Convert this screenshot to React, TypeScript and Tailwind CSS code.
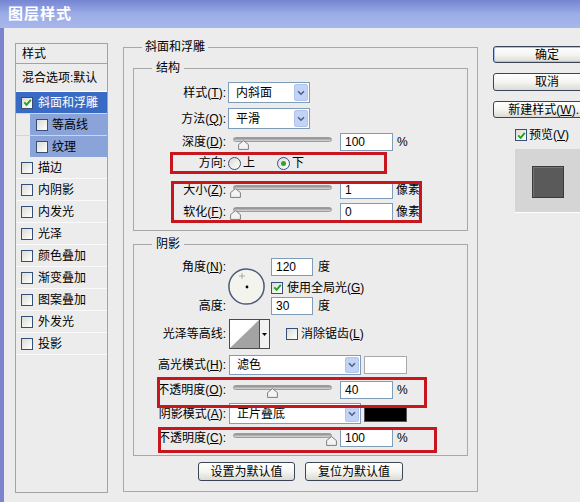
import React from 'react';

type Kids = { children?: React.ReactNode; className?: string };

const Check = ({ checked = false }: { checked?: boolean }) => (
  <span className="w-[12px] h-[12px] shrink-0 border border-[#34507a] bg-gradient-to-br from-[#dcdcd4] to-white flex items-center justify-center">
    {checked && (
      <svg width="9" height="9" viewBox="0 0 9 9">
        <path d="M1.3 4.4 L3.6 6.8 L7.8 1.8" fill="none" stroke="#21a121" strokeWidth="1.9" />
      </svg>
    )}
  </span>
);

const Radio = ({ checked = false }: { checked?: boolean }) => (
  <span className="w-[13px] h-[13px] shrink-0 rounded-full border border-[#34507a] bg-gradient-to-br from-[#dcdcd4] to-white flex items-center justify-center">
    {checked && <span className="w-[5px] h-[5px] rounded-full bg-[#2ba62b]" />}
  </span>
);

const Chevron = () => (
  <svg width="8" height="6" viewBox="0 0 8 6">
    <path d="M1 1.2 L4 4.2 L7 1.2" fill="none" stroke="#4d6185" strokeWidth="1.6" />
  </svg>
);

const Select = ({ value, className = '' }: { value: string; className?: string }) => (
  <div className={`flex items-center shrink-0 border border-[#7f9db9] bg-white ${className}`}>
    <span className="flex-1 pl-[7px]">{value}</span>
    <span className="w-[14px] self-stretch my-[1px] mr-[1px] rounded-[2px] bg-[#c3d3f6] border border-[#b1c4ee] flex items-center justify-center">
      <Chevron />
    </span>
  </div>
);

// handle centre is given in px from the left of the track
const Slider = ({ pos }: { pos: number }) => (
  <div className="relative w-[100px] h-[18px] ml-[6px] shrink-0">
    <div className="absolute left-[1px] right-0 top-[4px] h-[5px] rounded-full border border-[#9c9c9c] bg-gradient-to-b from-[#8c8c8c] to-[#dadada]" />
    <svg className="absolute top-[7px]" style={{ left: pos - 5.5 }} width="11" height="10" viewBox="0 0 11 10">
      <path d="M5.5 0.6 L10.4 4.6 V9.4 H0.6 V4.6 Z" fill="#f4f4f4" stroke="#7c7c7c" strokeWidth="1" />
    </svg>
  </div>
);

const NumInput = ({ children, className = 'w-[53px] ml-[8px]' }: Kids) => (
  <div className={`h-[18px] shrink-0 border border-[#7f9db9] bg-white pl-[4px] leading-[16px] ${className}`}>{children}</div>
);

const Label = ({ children }: Kids) => <span className="w-[92px] shrink-0 text-right">{children}</span>;

const Btn = ({ children, className = '' }: Kids) => (
  <div className={`flex items-center justify-center shrink-0 rounded-[3px] border border-[#3a4658] bg-gradient-to-b from-white via-[#f5f5f2] to-[#dcdcd5] ${className}`}>
    {children}
  </div>
);

const effects = ['描边', '内阴影', '内发光', '光泽', '颜色叠加', '渐变叠加', '图案叠加', '外发光', '投影'];

export default function App() {
  return (
    <div className="relative w-[580px] h-[502px] overflow-hidden bg-[#ececec] text-[12px] leading-[16px] text-black font-['Liberation_Sans','Noto_Sans_CJK_SC',sans-serif] flex flex-col">
      {/* Title bar */}
      <div className="h-[28px] shrink-0 pl-[8px] flex items-center bg-gradient-to-b from-[#7585d2] via-[#9cade7] to-[#a8b7eb]">
        <span className="text-white font-bold text-[15px] tracking-[1px]">图层样式</span>
      </div>

      <div className="flex-1 flex border-l-[4px] border-[#7b84cd] pl-[11px]">
        {/* Style list */}
        <div className="mt-[15px] w-[93px] h-[450px] shrink-0 border border-[#a3a3a3] flex flex-col">
          <div className="h-[20px] border-b border-[#a3a3a3] pl-[6px] flex items-center">样式</div>
          <div className="h-[28px] border-b border-white pl-[6px] flex items-center whitespace-nowrap">混合选项:默认</div>
          <div className="h-[21px] bg-[#3a6bc4] text-white flex items-center pl-[5px] gap-[5px]">
            <Check checked />
            斜面和浮雕
          </div>
          <div className="h-[22px] flex border-t border-[#c9d6f0]">
            <div className="ml-[14px] flex-1 bg-[#8aa4d9] flex items-center pl-[6px] gap-[4px]">
              <Check />
              等高线
            </div>
          </div>
          <div className="h-[22px] flex border-t border-[#c9d6f0]">
            <div className="ml-[14px] flex-1 bg-[#8aa4d9] flex items-center pl-[6px] gap-[4px]">
              <Check />
              纹理
            </div>
          </div>
          {effects.map((name) => (
            <div key={name} className="h-[22px] border-b border-[#fafafa] flex items-center pl-[5px] gap-[5px]">
              <Check />
              {name}
            </div>
          ))}
        </div>

        {/* Bevel and emboss settings */}
        <div className="ml-[15px] mt-[19px] w-[355px] self-start shrink-0 border border-[#a8a8a8] pb-[10px]">
          <div className="-mt-[9px] ml-[18px] px-[3px] w-fit bg-[#ececec]">斜面和浮雕</div>

          {/* Structure */}
          <div className="mt-[13px] mx-[9px] border border-[#a8a8a8] pb-[9px]">
            <div className="-mt-[9px] ml-[18px] px-[4px] w-fit bg-[#ececec]">结构</div>
            <div className="mt-[6px] h-[21px] flex items-center">
              <Label>样式(<u>T</u>):</Label>
              <Select value="内斜面" className="ml-[2px] w-[82px] h-[21px]" />
            </div>
            <div className="mt-[5px] h-[21px] flex items-center">
              <Label>方法(<u>Q</u>):</Label>
              <Select value="平滑" className="ml-[2px] w-[82px] h-[21px]" />
            </div>
            <div className="mt-[4px] h-[18px] flex items-center">
              <Label>深度(<u>D</u>):</Label>
              <Slider pos={11} />
              <NumInput>100</NumInput>
              <span className="ml-[4px]">%</span>
            </div>
            <div className="mt-[1px] h-[22px] flex items-center">
              <Label>方向:</Label>
              <span className="ml-[2px]"><Radio /></span>
              <span className="ml-[2px]">上</span>
              <span className="ml-[22px]"><Radio checked /></span>
              <span className="ml-[2px]">下</span>
            </div>
            <div className="mt-[7px] h-[18px] flex items-center">
              <Label>大小(<u>Z</u>):</Label>
              <Slider pos={3} />
              <NumInput>1</NumInput>
              <span className="ml-[3px]">像素</span>
            </div>
            <div className="mt-[4px] h-[18px] flex items-center">
              <Label>软化(<u>F</u>):</Label>
              <Slider pos={3} />
              <NumInput>0</NumInput>
              <span className="ml-[3px]">像素</span>
            </div>
          </div>

          {/* Shading */}
          <div className="mt-[13px] mx-[9px] border border-[#a8a8a8] pb-[8px]">
            <div className="-mt-[9px] ml-[18px] px-[4px] w-fit bg-[#ececec]">阴影</div>
            <div className="mt-[6px] h-[57px] flex">
              <div className="w-[92px] shrink-0 flex flex-col justify-between text-right">
                <div className="h-[18px] leading-[18px]">角度(<u>N</u>):</div>
                <div className="h-[18px] leading-[18px]">高度:</div>
              </div>
              <svg className="ml-[2px] mt-[10px] shrink-0" width="37" height="37" viewBox="0 0 37 37">
                <circle cx="18.5" cy="18.5" r="17.6" fill="#f4f4ef" stroke="#4c5a78" strokeWidth="1.5" />
                <path d="M14 5.5 V10.5 M11.5 8 H16.5" stroke="#666" strokeWidth="1" strokeDasharray="1 1" />
                <circle cx="19" cy="19" r="1.4" fill="#000" />
              </svg>
              <div className="ml-[6px] flex flex-col">
                <div className="flex items-center">
                  <NumInput className="w-[42px]">120</NumInput>
                  <span className="ml-[5px]">度</span>
                </div>
                <div className="mt-[5px] h-[13px] flex items-center">
                  <Check checked />
                  <span className="ml-[4px]">使用全局光(<u>G</u>)</span>
                </div>
                <div className="mt-[3px] flex items-center">
                  <NumInput className="w-[42px]">30</NumInput>
                  <span className="ml-[5px]">度</span>
                </div>
              </div>
            </div>
            <div className="mt-[4px] h-[30px] flex items-center">
              <Label>光泽等高线:</Label>
              <div className="ml-[3px] h-[30px] flex border border-[#4a4a4a] bg-white">
                <svg width="29" height="28" viewBox="0 0 29 28">
                  <polygon points="0,28 29,0 29,28" fill="#a3a3a3" />
                </svg>
                <div className="w-[10px] border-l border-[#4a4a4a] bg-[#f2f2f2] flex items-center justify-center">
                  <svg width="5" height="3" viewBox="0 0 5 3">
                    <polygon points="0,0 5,0 2.5,3" fill="#000" />
                  </svg>
                </div>
              </div>
              <span className="ml-[16px]"><Check /></span>
              <span className="ml-[3px]">消除锯齿(<u>L</u>)</span>
            </div>
            <div className="mt-[6px] h-[20px] flex items-center">
              <Label>高光模式(<u>H</u>):</Label>
              <Select value="滤色" className="ml-[3px] w-[132px] h-[20px]" />
              <div className="ml-[3px] w-[43px] h-[18px] border border-[#a9a9a9] bg-white" />
            </div>
            <div className="mt-[6px] h-[18px] flex items-center">
              <Label>不透明度(<u>O</u>):</Label>
              <Slider pos={40} />
              <NumInput>40</NumInput>
              <span className="ml-[4px]">%</span>
            </div>
            <div className="mt-[4px] h-[21px] flex items-center">
              <Label>阴影模式(<u>A</u>):</Label>
              <Select value="正片叠底" className="ml-[3px] w-[132px] h-[21px]" />
              <div className="ml-[3px] w-[43px] h-[16px] border border-[#555] bg-black" />
            </div>
            <div className="mt-[5px] h-[18px] flex items-center">
              <Label>不透明度(<u>C</u>):</Label>
              <Slider pos={99} />
              <NumInput>100</NumInput>
              <span className="ml-[4px]">%</span>
            </div>
          </div>

          <div className="mt-[6px] flex justify-center gap-[10px]">
            <Btn className="w-[97px] h-[19px]">设置为默认值</Btn>
            <Btn className="w-[98px] h-[19px]">复位为默认值</Btn>
          </div>
        </div>

        {/* Dialog buttons and preview */}
        <div className="ml-[15px] w-[108px] shrink-0 flex flex-col">
          <Btn className="mt-[18px] h-[17px] shadow-[inset_0_0_0_1px_#a9c0ee]">确定</Btn>
          <Btn className="mt-[10px] h-[18px]">取消</Btn>
          <Btn className="mt-[10px] h-[17px] whitespace-nowrap">新建样式(<u>W</u>)...</Btn>
          <div className="mt-[11px] ml-[22px] h-[12px] flex items-center gap-[2px]">
            <Check checked />
            <span>预览(<u>V</u>)</span>
          </div>
          <div className="mt-[8px] ml-[22px] w-[86px] h-[64px] bg-[#d5d5d5] border-b border-white pl-[17px] pt-[17px]">
            <div className="w-[32px] h-[32px] bg-[#5a5a5a] border border-[#3a3a3a] shadow-[inset_1px_1px_0_#747474]" />
          </div>
        </div>
      </div>

      {/* Red markers over the edited settings */}
      <div className="absolute left-[170px] top-[152px] w-[217px] h-[22px] border-[3px] border-[#c8161e]" />
      <div className="absolute left-[171px] top-[181px] w-[251px] h-[42px] border-[3px] border-[#c8161e]" />
      <div className="absolute left-[157px] top-[377px] w-[270px] h-[31px] border-[3px] border-[#c8161e]" />
      <div className="absolute left-[158px] top-[427px] w-[279px] h-[26px] border-[3px] border-[#c8161e]" />
    </div>
  );
}
